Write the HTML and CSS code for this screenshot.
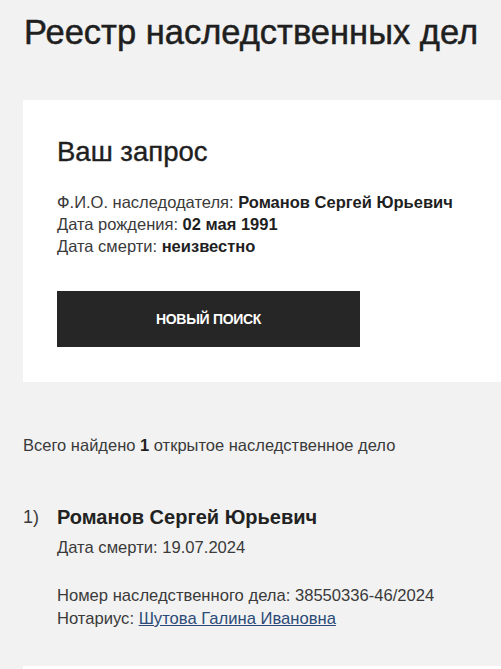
FILE: index.html
```html
<!DOCTYPE html>
<html lang="ru">
<head>
<meta charset="utf-8">
<link rel="stylesheet" href="styles.css">
</head>
<body>
<main class="page">
  <h1 class="title">Реестр наследственных дел</h1>
  <section class="card">
    <h2 class="card-title">Ваш запрос</h2>
    <div class="query">
      <div>Ф.И.О. наследодателя: <b>Романов Сергей Юрьевич</b></div>
      <div>Дата рождения: <b>02 мая 1991</b></div>
      <div>Дата смерти: <b>неизвестно</b></div>
    </div>
    <button class="btn">НОВЫЙ ПОИСК</button>
  </section>
  <p class="found">Всего найдено <b>1</b> открытое наследственное дело</p>
  <div class="case">
    <div class="num">1)</div>
    <div class="case-body">
      <div class="case-name">Романов Сергей Юрьевич</div>
      <div class="case-line">Дата смерти: 19.07.2024</div>
      <div class="case-info">
        <div>Номер наследственного дела: 38550336-46/2024</div>
        <div>Нотариус: <a href="#" class="link">Шутова Галина Ивановна</a></div>
      </div>
    </div>
  </div>
  <section class="card next"></section>
</main>
</body>
</html>
```
FILE: styles.css
```css
* { box-sizing: border-box; }
html, body { margin: 0; padding: 0; }
body {
  background: #f2f2f2;
  color: #222;
  font-family: "Liberation Sans", Arial, sans-serif;
  overflow: hidden;
}
.page {
  padding: 0 0 0 23px;
}
.title {
  margin: 0;
  padding: 12px 0 0 1px;
  font-size: 34.5px;
  font-weight: 400;
  line-height: 40px;
  color: #1f1f1f;
  -webkit-text-stroke: 0.5px #1f1f1f;
  white-space: nowrap;
}
.card {
  background: #fff;
  margin-top: 48px;
  padding: 37px 0 35px 34px;
}
.card-title {
  margin: 0;
  font-size: 27.5px;
  font-weight: 400;
  line-height: 30px;
  color: #1f1f1f;
  -webkit-text-stroke: 0.4px #1f1f1f;
}
.query {
  margin-top: 24px;
  font-size: 16.5px;
  line-height: 22px;
  color: #3a3a3a;
}
.query b { color: #1f1f1f; }
.btn {
  display: block;
  margin-top: 34px;
  width: 303px;
  height: 56px;
  border: 0;
  background: #262626;
  color: #fff;
  font-family: "Liberation Sans", Arial, sans-serif;
  font-weight: 700;
  font-size: 14px;
  letter-spacing: -0.3px;
}
.found {
  margin: 52px 0 0;
  font-size: 16.5px;
  line-height: 22px;
  color: #3a3a3a;
}
.found b { color: #1f1f1f; }
.case {
  display: flex;
  margin-top: 48px;
}
.num {
  width: 34px;
  font-size: 18px;
  line-height: 26px;
  color: #3a3a3a;
}
.case-name {
  font-size: 20px;
  font-weight: 700;
  line-height: 26px;
  color: #222;
}
.case-line {
  margin-top: 7px;
  font-size: 16.6px;
  line-height: 22px;
  color: #3a3a3a;
}
.case-info {
  margin-top: 25px;
  font-size: 16.6px;
  line-height: 23px;
  color: #3a3a3a;
}
.link {
  color: #2b4a78;
  text-decoration: underline;
}
.card.next {
  margin-top: 36px;
  height: 40px;
  padding: 0;
}
```
